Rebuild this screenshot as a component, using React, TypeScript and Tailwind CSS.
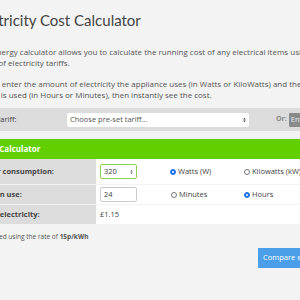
import React from "react";

const font = { fontFamily: '"Open Sans", "Noto Sans", sans-serif' };

// small up/down chevrons used in the select and number field
const UpDown = ({ className }: { className?: string }) => (
  <svg viewBox="0 0 6 10" className={className} fill="currentColor">
    <path d="M3 0.5 L5.5 4 H0.5 Z" />
    <path d="M3 9.5 L5.5 6 H0.5 Z" />
  </svg>
);

const Radio = ({ checked, label }: { checked?: boolean; label: string }) => (
  <div className="flex items-center gap-[2px]">
    {checked ? (
      <span className="w-[6px] h-[6px] rounded-full bg-[#1a73e8] border border-[#1a73e8] flex items-center justify-center">
        <span className="w-[2px] h-[2px] rounded-full bg-white" />
      </span>
    ) : (
      <span className="w-[6px] h-[6px] rounded-full bg-white border border-[#777]" />
    )}
    <span className="text-[7.5px] text-[#444]">{label}</span>
  </div>
);

export default function App() {
  return (
    <div className="w-[300px] h-[300px] overflow-hidden bg-[#f3f3f3]" style={font}>
      <div className="ml-[-25px] w-[400px]">
        {/* Heading */}
        <h1
          className="pt-[10px] ml-[-4px] text-[15px] leading-[20px] text-[#444]"
          style={{ fontFamily: 'Lato, "Open Sans", sans-serif' }}
        >
          Electricity Cost Calculator
        </h1>

        {/* Intro */}
        <p className="mt-[16px] text-[8px] leading-[11px] text-[#555]">
          This energy calculator allows you to calculate the running cost of any electrical items using a
          <br />
          range of electricity tariffs.
        </p>
        <p className="mt-[10px] text-[8px] leading-[11px] text-[#555]">
          Simply enter the amount of electricity the appliance uses (in Watts or KiloWatts) and the
          <br />
          time it is used (in Hours or Minutes), then instantly see the cost.
        </p>

        {/* Tariff bar */}
        <div className="mt-[8px] h-[23px] flex items-center bg-[#dcdcdc]">
          <span className="w-[92px] text-[7.5px] text-[#444]">Select tariff:</span>
          <div className="w-[182px] h-[14px] flex items-center justify-between bg-white rounded-[2px] px-[3px]">
            <span className="text-[7.5px] text-[#555]">Choose pre-set tariff...</span>
            <UpDown className="w-[3px] h-[6px] text-[#333]" />
          </div>
          <span className="ml-[27px] text-[7px] font-bold text-[#888]">Or:</span>
          <div className="ml-[2px] h-[14px] px-[2px] flex items-center bg-[#8a8a8a] rounded-[1px]">
            <span className="text-[7.5px] text-[#eee]">Enter your own</span>
          </div>
        </div>

        {/* Calculator table */}
        <div className="mt-[8px]">
          <div className="h-[20px] flex items-center bg-[#62d000]">
            <span className="ml-[-3px] text-[8px] font-bold text-white">Power Calculator</span>
          </div>

          <div className="flex h-[26px] border-b border-[#f3f3f3]">
            <div className="w-[121px] flex items-center pl-[2px] bg-[#dcdcdc]">
              <span className="text-[7.5px] font-bold text-[#444]">Power consumption:</span>
            </div>
            <div className="flex-1 flex items-center bg-white">
              <div className="w-[74px] pl-[4px]">
                <div className="w-[37px] h-[15px] flex items-center justify-between px-[3px] border border-[#8fd14f] rounded-[2px] bg-white">
                  <span className="text-[7.5px] text-[#444]">320</span>
                  <UpDown className="w-[3px] h-[6px] text-[#666]" />
                </div>
              </div>
              <div className="w-[74px]">
                <Radio checked label="Watts (W)" />
              </div>
              <Radio label="Kilowatts (kW)" />
            </div>
          </div>

          <div className="flex h-[20px] border-b border-[#f3f3f3]">
            <div className="w-[121px] flex items-center pl-[2px] bg-[#dcdcdc]">
              <span className="text-[7.5px] font-bold text-[#444]">Time in use:</span>
            </div>
            <div className="flex-1 flex items-center bg-white">
              <div className="w-[75px] pl-[4px]">
                <div className="w-[37px] h-[15px] flex items-center px-[3px] border border-[#ccc] rounded-[2px] bg-white">
                  <span className="text-[7.5px] text-[#444]">24</span>
                </div>
              </div>
              <div className="w-[73px]">
                <Radio label="Minutes" />
              </div>
              <Radio checked label="Hours" />
            </div>
          </div>

          <div className="flex h-[19px]">
            <div className="w-[121px] flex items-center bg-[#dcdcdc]">
              <span className="ml-[-3px] text-[7.5px] font-bold text-[#444]">Cost of electricity:</span>
            </div>
            <div className="flex-1 flex items-center pl-[4px] bg-white">
              <span className="text-[7.5px] text-[#444]">£1.15</span>
            </div>
          </div>
        </div>

        {/* Note */}
        <p className="mt-[8px] text-[6.5px] leading-[10px] text-[#555]">
          Calculated using the rate of <span className="font-bold">15p/kWh</span>
        </p>

        {/* Compare button */}
        <div className="mt-[6px] ml-[283px] w-[110px] h-[20px] flex items-center px-[5px] bg-[#4a9fe8]">
          <span className="text-[7.5px] text-white whitespace-nowrap">Compare electricity prices</span>
        </div>
      </div>
    </div>
  );
}
